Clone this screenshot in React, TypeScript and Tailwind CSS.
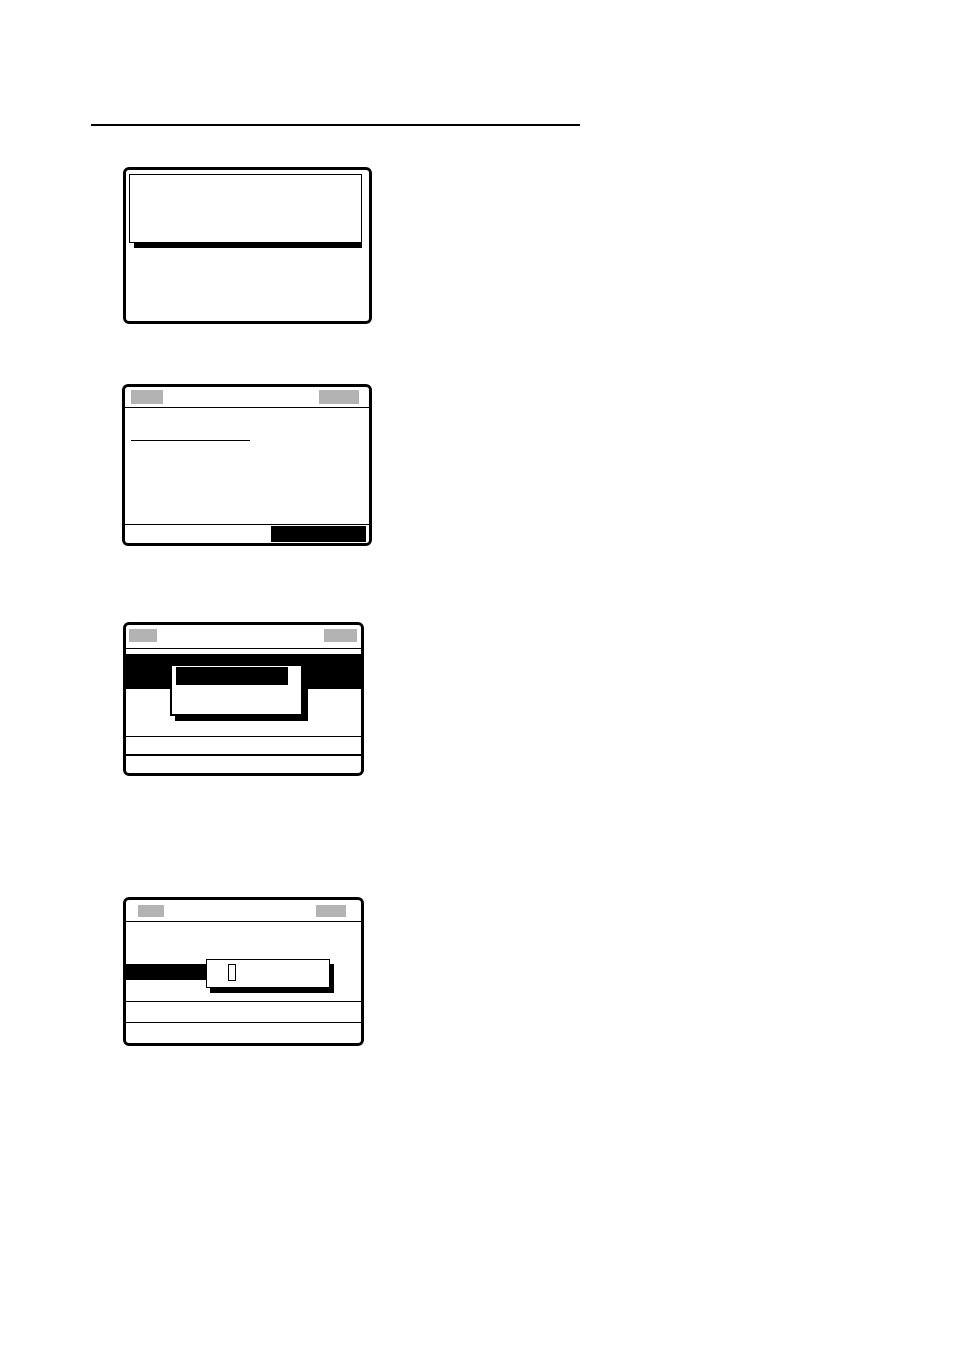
import React from 'react';

// Gray soft-key placeholder in a screen header
const Key: React.FC<{ className: string }> = ({ className }) => (
    <div className={`bg-[#b3b3b3] ${className}`} />
);

export default function App() {
    return (
        <div className="w-[954px] h-[1350px] bg-white overflow-hidden pt-[124px] font-['Liberation_Sans',sans-serif]">
            {/* Section rule */}
            <div className="ml-[91px] w-[489px] h-[2px] bg-black" />

            {/* Screen 1 */}
            <div className="mt-[41px] ml-[123px] w-[249px] h-[157px] border-[3px] border-black rounded-[6px] pl-[3px] pr-[7px] pt-[4px]">
                <div className="h-[69px] border border-black" />
                <div className="ml-[5px] h-[5px] bg-black" />
            </div>

            {/* Screen 2 */}
            <div className="mt-[60px] ml-[122px] w-[250px] h-[162px] border-[3px] border-black rounded-[6px] flex flex-col">
                <div className="h-[21px] border-b border-black flex justify-between items-start pt-[3px] pl-[6px] pr-[10px]">
                    <Key className="w-[32px] h-[14px]" />
                    <Key className="w-[40px] h-[14px]" />
                </div>
                <div className="flex-1 pt-[32px] pl-[6px]">
                    <div className="w-[119px] h-[1px] bg-black" />
                </div>
                <div className="h-[19px] border-t border-black flex justify-end pt-[1px] pr-[3px]">
                    <div className="w-[95px] h-[16px] bg-black" />
                </div>
            </div>

            {/* Screen 3 */}
            <div className="mt-[76px] ml-[123px] w-[241px] h-[154px] border-[3px] border-black rounded-[6px] flex flex-col">
                <div className="h-[24px] border-b border-black flex justify-between items-start pt-[4px] pl-[3px] pr-[4px]">
                    <Key className="w-[28px] h-[13px]" />
                    <Key className="w-[33px] h-[13px]" />
                </div>
                <div className="relative h-[88px] border-b border-black pt-[5px]">
                    <div className="h-[35px] bg-black" />
                    <div className="absolute left-[44px] top-[15px] w-[133px] h-[52px] bg-white border-2 border-black shadow-[5px_5px_0_#000] pl-[4px] pt-[1px]">
                        <div className="w-[112px] h-[18px] bg-black" />
                    </div>
                </div>
                <div className="h-[19px] border-b-2 border-black" />
                <div className="flex-1" />
            </div>

            {/* Screen 4 */}
            <div className="mt-[121px] ml-[123px] w-[241px] h-[149px] border-[3px] border-black rounded-[6px] flex flex-col">
                <div className="h-[22px] border-b border-black flex justify-between items-start pt-[5px] pl-[12px] pr-[15px]">
                    <Key className="w-[26px] h-[12px]" />
                    <Key className="w-[30px] h-[12px]" />
                </div>
                <div className="relative h-[80px] border-b border-black pt-[42px]">
                    <div className="w-[81px] h-[16px] bg-black" />
                    <div className="absolute left-[80px] top-[37px] w-[124px] h-[29px] bg-white border border-black shadow-[4px_5px_0_#000] pl-[21px] pt-[4px]">
                        <div className="w-[8px] h-[17px] border border-black" />
                    </div>
                </div>
                <div className="h-[21px] border-b border-black" />
                <div className="flex-1" />
            </div>
        </div>
    );
}
